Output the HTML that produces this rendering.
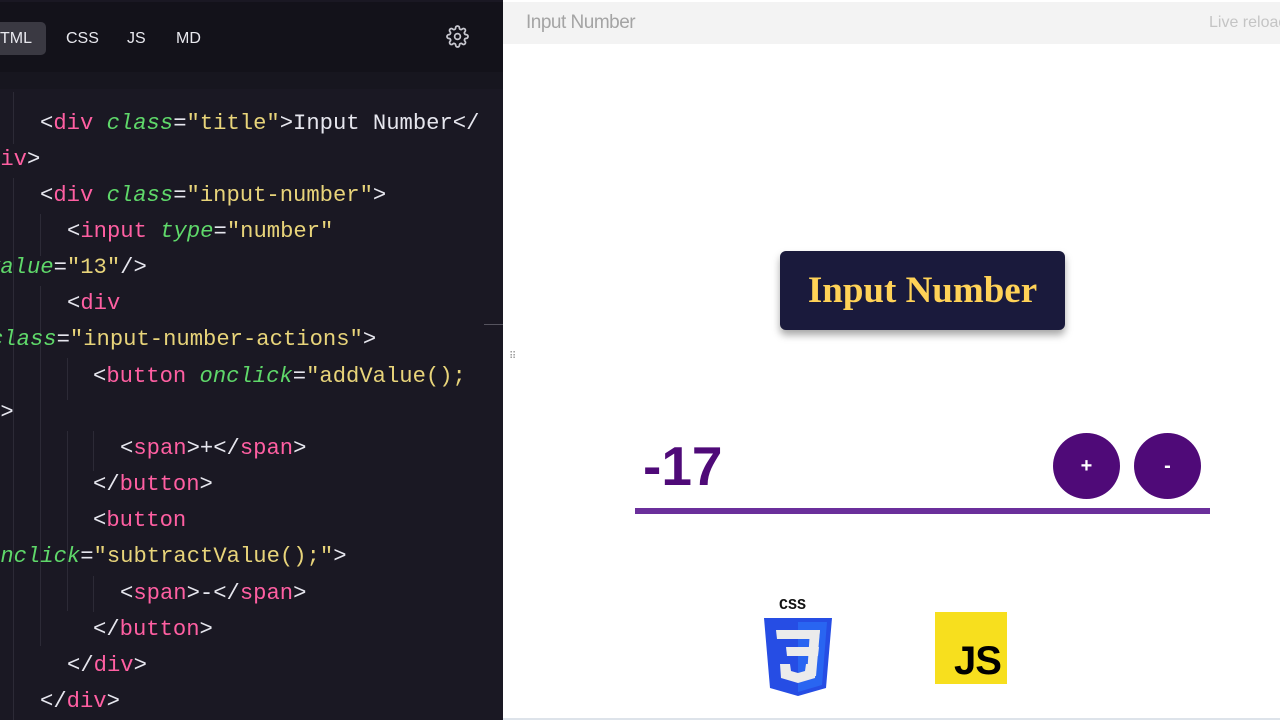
<!DOCTYPE html>
<html><head><meta charset="utf-8"><style>
*{margin:0;padding:0;box-sizing:border-box}
body{width:1280px;height:720px;overflow:hidden;position:relative;background:#fff;font-family:"Liberation Sans",sans-serif}
#left{position:absolute;left:0;top:0;width:503px;height:720px;background:#1a1823;overflow:hidden}
#tabs{position:absolute;left:0;top:2px;width:503px;height:70px;background:#13121a}
#band{position:absolute;left:0;top:72px;width:503px;height:17px;background:#17161f}
.tab{position:absolute;top:20px;height:33px;line-height:33px;color:#e8e8ee;font-size:16px}
.code{position:absolute;font-family:"Liberation Mono",monospace;font-size:22.2px;white-space:pre;color:#e6e6ee;line-height:36px;height:36px}
.t{color:#ff5fa2}.a{color:#5fd86a;font-style:italic}.s{color:#e8d47a}
.guide{position:absolute;width:1px;background:#2c2a36}
#right{position:absolute;left:503px;top:0;width:777px;height:720px;background:#fff}
</style></head><body>
<div style="position:absolute;left:0;top:0;width:1280px;height:2px;background:#c9d6e3"></div>
<div id="left">
 <div id="tabs">
  <div class="tab" style="left:-10px;width:56px;background:#3a3942;border-radius:5px;padding-left:10px">TML</div>
  <div class="tab" style="left:66px">CSS</div>
  <div class="tab" style="left:127px">JS</div>
  <div class="tab" style="left:176px">MD</div>
  <svg style="position:absolute;left:446px;top:23px" width="23" height="23" viewBox="0 0 24 24" fill="none" stroke="#c8c8d0" stroke-width="1.8"><circle cx="12" cy="12" r="3"/><path d="M19.4 15a1.65 1.65 0 0 0 .33 1.82l.06.06a2 2 0 1 1-2.830 2.83l-.06-.06a1.65 1.65 0 0 0-1.82-.33 1.65 1.65 0 0 0-1 1.51V21a2 2 0 1 1-4 0v-.09A1.65 1.65 0 0 0 9 19.4a1.65 1.65 0 0 0-1.82.33l-.06.06a2 2 0 1 1-2.83-2.83l.06-.06a1.65 1.65 0 0 0 .33-1.82 1.65 1.65 0 0 0-1.51-1H3a2 2 0 1 1 0-4h.09A1.65 1.65 0 0 0 4.6 9a1.65 1.65 0 0 0-.33-1.82l-.06-.06a2 2 0 1 1 2.830-2.83l.06.06a1.65 1.65 0 0 0 1.82.33H9a1.65 1.65 0 0 0 1-1.51V3a2 2 0 1 1 4 0v.09a1.65 1.65 0 0 0 1 1.51 1.65 1.65 0 0 0 1.82-.33l.06-.06a2 2 0 1 1 2.83 2.83l-.06.06a1.65 1.65 0 0 0-.33 1.82V9a1.65 1.65 0 0 0 1.51 1H21a2 2 0 1 1 0 4h-.09a1.65 1.65 0 0 0-1.51 1z"/></svg>
 </div>
 <div id="band"></div>
 <div class="guide" style="left:13px;top:92px;height:52px"></div>
 <div class="guide" style="left:13px;top:178px;height:542px"></div>
 <div class="guide" style="left:40px;top:214px;height:42px"></div>
 <div class="guide" style="left:40px;top:286px;height:360px"></div>
 <div class="guide" style="left:67px;top:358px;height:42px"></div>
 <div class="guide" style="left:67px;top:431px;height:180px"></div>
 <div class="guide" style="left:93px;top:431px;height:40px"></div>
 <div class="guide" style="left:93px;top:576px;height:36px"></div>
 <div class="guide" style="left:484px;top:324px;height:1px;width:19px;background:#55535e"></div>
 <div class="code" style="left:40px;top:106px">&lt;<span class="t">div</span> <span class="a">class</span>=<span class="s">"title"</span>&gt;Input Number&lt;/</div>
 <div class="code" style="left:-13px;top:142px"><span class="t">div</span>&gt;</div>
 <div class="code" style="left:40px;top:178px">&lt;<span class="t">div</span> <span class="a">class</span>=<span class="s">"input-number"</span>&gt;</div>
 <div class="code" style="left:67px;top:214px">&lt;<span class="t">input</span> <span class="a">type</span>=<span class="s">"number"</span></div>
 <div class="code" style="left:-13px;top:250px"><span class="a">value</span>=<span class="s">"13"</span>/&gt;</div>
 <div class="code" style="left:67px;top:286px">&lt;<span class="t">div</span></div>
 <div class="code" style="left:-10px;top:322px"><span class="a">class</span>=<span class="s">"input-number-actions"</span>&gt;</div>
 <div class="code" style="left:93px;top:359px">&lt;<span class="t">button</span> <span class="a">onclick</span>=<span class="s">"addValue();</span></div>
 <div class="code" style="left:-13px;top:395px"><span class="s">"</span>&gt;</div>
 <div class="code" style="left:120px;top:431px">&lt;<span class="t">span</span>&gt;+&lt;/<span class="t">span</span>&gt;</div>
 <div class="code" style="left:93px;top:467px">&lt;/<span class="t">button</span>&gt;</div>
 <div class="code" style="left:93px;top:503px">&lt;<span class="t">button</span></div>
 <div class="code" style="left:-13px;top:539px"><span class="a">onclick</span>=<span class="s">"subtractValue();"</span>&gt;</div>
 <div class="code" style="left:120px;top:576px">&lt;<span class="t">span</span>&gt;-&lt;/<span class="t">span</span>&gt;</div>
 <div class="code" style="left:93px;top:612px">&lt;/<span class="t">button</span>&gt;</div>
 <div class="code" style="left:67px;top:648px">&lt;/<span class="t">div</span>&gt;</div>
 <div class="code" style="left:40px;top:684px">&lt;/<span class="t">div</span>&gt;</div>
</div>
<div id="right">
 <div style="position:absolute;left:0;top:2px;width:777px;height:42px;background:#f3f3f3"></div>
 <div style="position:absolute;left:23px;top:12px;font-size:19px;color:#a4a4a4;letter-spacing:-0.5px">Input Number</div>
 <div style="position:absolute;left:706px;top:14px;font-size:16px;color:#c4c4c4;white-space:nowrap">Live reload</div>
 <div style="position:absolute;left:6px;top:354px;color:#999;font-size:10px;line-height:5px">⠿</div>
 <div style="position:absolute;left:277px;top:251px;width:285px;height:79px;background:#1a1a3c;border-radius:6px;box-shadow:0 5px 8px rgba(0,0,0,0.35);text-align:center;color:#ffd257;font:bold 37px 'Liberation Serif',serif;line-height:79px">Input Number</div>
 <div style="position:absolute;left:140px;top:431px;font:bold 55px 'Liberation Sans',sans-serif;color:#4f0a78;line-height:70px">-17</div>
 <div style="position:absolute;left:550px;top:433px;width:67px;height:66px;border-radius:50%;background:#4f0a78;color:#fff;font:bold 20px 'Liberation Sans',sans-serif;text-align:center;line-height:66px">+</div>
 <div style="position:absolute;left:631px;top:433px;width:67px;height:66px;border-radius:50%;background:#4f0a78;color:#fff;font:bold 20px 'Liberation Sans',sans-serif;text-align:center;line-height:66px">-</div>
 <div style="position:absolute;left:132px;top:508px;width:575px;height:6px;background:#6b2f9b"></div>
 <div style="position:absolute;left:276px;top:597px;font:900 15px 'Liberation Mono',monospace;color:#111">CSS</div>
 <svg style="position:absolute;left:261px;top:618px" width="68" height="78" viewBox="0 0 68 78"><path d="M0 0H68L62 70L34 78L6 70Z" fill="#264de4"/><path d="M34 4H63L58 67L34 74Z" fill="#2965f1"/><g fill="#ebebeb"><path d="M12 12H56L55 21H13Z"/><path d="M22 29H55L54 38H23Z"/><path d="M46 12H56L52 58H43Z"/><path d="M16 46H26L27 53L34 55L41 53L42 46H52L51 60L34 65L17 60Z"/></g></svg>
 <div style="position:absolute;left:432px;top:612px;width:72px;height:72px;background:#f7df1e"></div>
 <div style="position:absolute;left:451px;top:636px;font:bold 40px 'Liberation Sans',sans-serif;color:#000;line-height:50px;letter-spacing:-1px">JS</div>
 <div style="position:absolute;left:0;top:718px;width:777px;height:2px;background:#dde3ea"></div>
</div>
</body></html>
